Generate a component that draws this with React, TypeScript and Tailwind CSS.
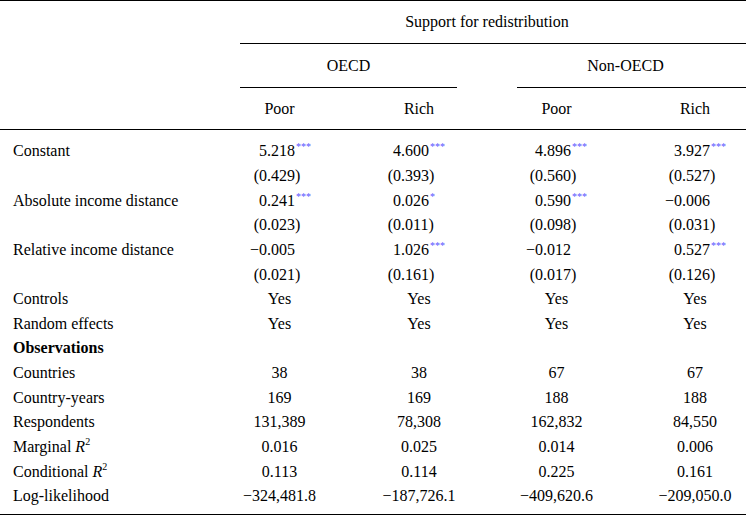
import React from 'react'

type Val = { i: string; f: string; s?: string }

const dotW = ['w-[57px]', 'w-[52px]', 'w-[54px]', 'w-[58px]']
const grid = 'grid grid-cols-[210px_139px_140px_135px_142px]'

const coefRows: { label: string; est: Val[]; se: Val[] }[] = [
  {
    label: 'Constant',
    est: [{ i: '5', f: '.218', s: '***' }, { i: '4', f: '.600', s: '***' }, { i: '4', f: '.896', s: '***' }, { i: '3', f: '.927', s: '***' }],
    se: [{ i: '(0', f: '.429)' }, { i: '(0', f: '.393)' }, { i: '(0', f: '.560)' }, { i: '(0', f: '.527)' }],
  },
  {
    label: 'Absolute income distance',
    est: [{ i: '0', f: '.241', s: '***' }, { i: '0', f: '.026', s: '*' }, { i: '0', f: '.590', s: '***' }, { i: '−0', f: '.006' }],
    se: [{ i: '(0', f: '.023)' }, { i: '(0', f: '.011)' }, { i: '(0', f: '.098)' }, { i: '(0', f: '.031)' }],
  },
  {
    label: 'Relative income distance',
    est: [{ i: '−0', f: '.005' }, { i: '1', f: '.026', s: '***' }, { i: '−0', f: '.012' }, { i: '0', f: '.527', s: '***' }],
    se: [{ i: '(0', f: '.021)' }, { i: '(0', f: '.161)' }, { i: '(0', f: '.017)' }, { i: '(0', f: '.126)' }],
  },
]

const plainRows: { label: React.ReactNode; vals: string[]; bold?: boolean }[] = [
  { label: 'Controls', vals: ['Yes', 'Yes', 'Yes', 'Yes'] },
  { label: 'Random effects', vals: ['Yes', 'Yes', 'Yes', 'Yes'] },
  { label: 'Observations', vals: ['', '', '', ''], bold: true },
  { label: 'Countries', vals: ['38', '38', '67', '67'] },
  { label: 'Country-years', vals: ['169', '169', '188', '188'] },
  { label: 'Respondents', vals: ['131,389', '78,308', '162,832', '84,550'] },
  {
    label: <>Marginal <i>R</i><sup className="relative -top-[7px] text-[10px]">2</sup></>,
    vals: ['0.016', '0.025', '0.014', '0.006'],
  },
  {
    label: <>Conditional <i>R</i><sup className="relative -top-[7px] text-[10px]">2</sup></>,
    vals: ['0.113', '0.114', '0.225', '0.161'],
  },
  { label: 'Log-likelihood', vals: ['−324,481.8', '−187,726.1', '−409,620.6', '−209,050.0'] },
]

function DecCell({ v, col }: { v: Val; col: number }) {
  return (
    <div className="flex items-center">
      <span className={`${dotW[col]} shrink-0 text-right`}>{v.i}</span>
      <span className="whitespace-nowrap">
        {v.f}
        {v.s && <span className="relative -top-[6px] ml-[1px] text-[10px] text-[#5555ff]">{v.s}</span>}
      </span>
    </div>
  )
}

function DecRow({ label, vals }: { label: string; vals: Val[] }) {
  return (
    <div className={`${grid} h-[24.65px] items-center`}>
      <div className="pl-[13px] whitespace-nowrap">{label}</div>
      {vals.map((v, k) => <DecCell key={k} v={v} col={k} />)}
    </div>
  )
}

export default function App() {
  return (
    <div
      className="w-[746px] h-[516px] overflow-hidden bg-white text-black text-[16px] leading-none border-t border-black"
      style={{ fontFamily: '"Liberation Serif", "Times New Roman", serif' }}
    >
      <div className="ml-[240px] h-[43px] border-b border-black flex items-center justify-center pr-[12px]">
        Support for redistribution
      </div>
      <div className="ml-[240px] h-[44px] flex">
        <div className="w-[217px] border-b border-black flex items-center justify-center">OECD</div>
        <div className="w-[60px]" />
        <div className="w-[229px] border-b border-black flex items-center justify-center pr-[12px]">Non-OECD</div>
      </div>
      <div className={`${grid} h-[42px] items-center border-b border-black`}>
        <div />
        <div className="text-center">Poor</div>
        <div className="text-center">Rich</div>
        <div className="text-center">Poor</div>
        <div className="text-center">Rich</div>
      </div>

      <div className="pt-[9px]">
        {coefRows.map((r) => (
          <React.Fragment key={r.label}>
            <DecRow label={r.label} vals={r.est} />
            <DecRow label="" vals={r.se} />
          </React.Fragment>
        ))}
        {plainRows.map((r, k) => (
          <div key={k} className={`${grid} h-[24.65px] items-center`}>
            <div className={`pl-[13px] whitespace-nowrap ${r.bold ? 'font-bold' : ''}`}>{r.label}</div>
            {r.vals.map((v, j) => (
              <div key={j} className="text-center whitespace-nowrap">{v}</div>
            ))}
          </div>
        ))}
      </div>
      <div className="mt-[5px] border-t border-black" />
    </div>
  )
}
